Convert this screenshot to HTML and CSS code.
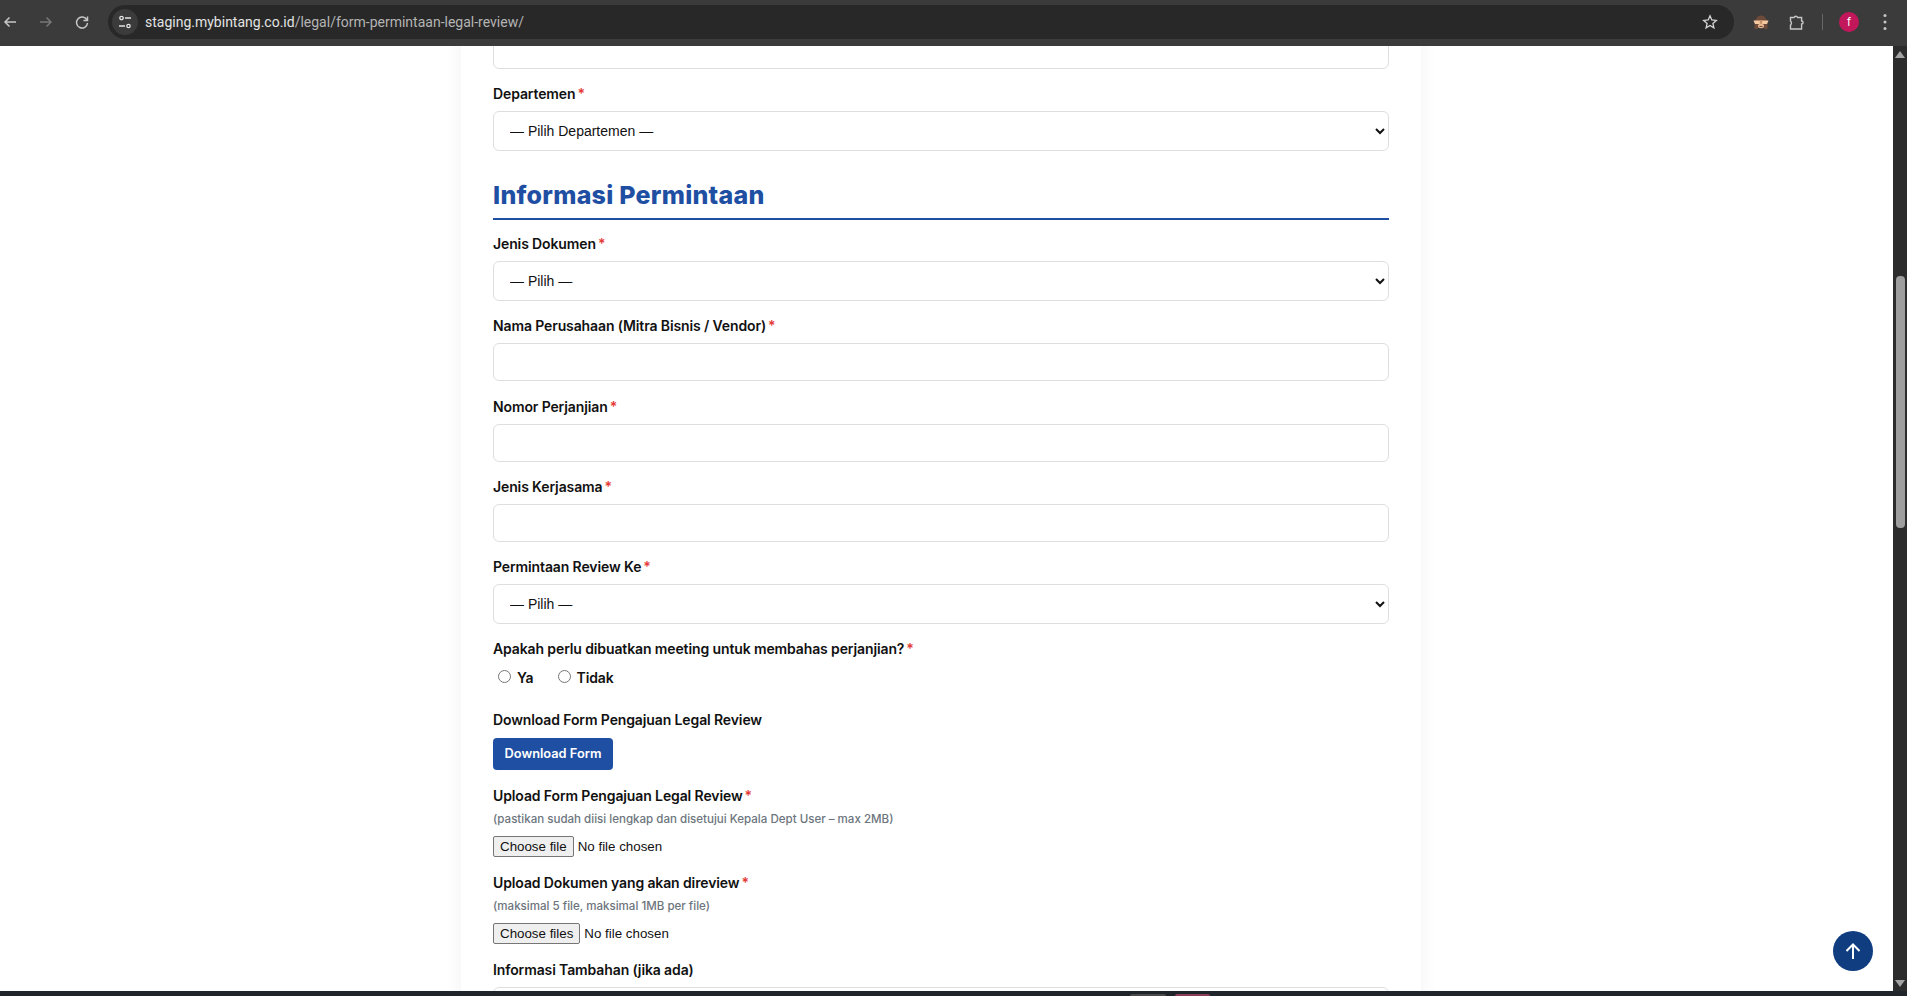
FILE: index.html
```html
<!DOCTYPE html>
<html lang="id">
<head>
<meta charset="utf-8">
<title>Form Permintaan Legal Review</title>
<link rel="stylesheet" href="styles.css">
</head>
<body>
<header class="toolbar">
  <div class="nav">
    <svg class="ic" viewBox="0 0 16 16" width="16" height="16"><path d="M14 8H3M7.500 3.500 3 8l4.500 4.500" fill="none" stroke="#c7c7c7" stroke-width="1.500"/></svg>
    <svg class="ic" viewBox="0 0 16 16" width="16" height="16"><path d="M2 8h11M8.500 3.500 13 8l-4.500 4.500" fill="none" stroke="#777" stroke-width="1.500"/></svg>
    <svg class="ic" viewBox="0 0 16 16" width="16" height="16"><path d="M12.900 6A5.500 5.500 0 1 0 13.500 9M13.500 2.500V6.500H9.500" fill="none" stroke="#c7c7c7" stroke-width="1.500"/></svg>
  </div>
  <div class="omnibox">
    <div class="tune">
      <svg viewBox="0 0 16 16" width="16" height="16"><g fill="none" stroke="#e3e3e3" stroke-width="1.300"><circle cx="4.500" cy="4" r="1.700"/><circle cx="11.500" cy="12" r="1.700"/><path d="M8 4h6M2 12h6"/></g></svg>
    </div>
    <span class="url">staging.mybintang.co.id<span class="url-path">/legal/form-permintaan-legal-review/</span></span>
    <svg class="star" viewBox="0 0 16 16" width="16" height="16"><path d="M8 1.800 9.800 6l4.500.4-3.400 3 1 4.400L8 11.500l-3.900 2.300 1-4.400-3.400-3L6.200 6z" fill="none" stroke="#d6d6d6" stroke-width="1.300"/></svg>
  </div>
  <div class="actions">
    <svg class="monkey" viewBox="0 0 16 16" width="16" height="16"><path d="M1.500 15V10a6.500 8.500 0 0 1 13 0v5h-3l-1-2h-5l-1 2z" fill="#6d4a3a"/><path d="M.5 6.500h15l-1.500 3.500H2z" fill="#f5c9a0"/><rect x="6.800" y="6.500" width="2.400" height="3.500" fill="#c9916c"/><ellipse cx="8" cy="12" rx="3" ry="2.200" fill="#e9b78f"/><path d="M6.500 12.500h3" stroke="#6d4a3a"/></svg>
    <svg class="puzzle" viewBox="0 0 16 16" width="16" height="16"><path d="M1.500 3.500H5a1.900 1.900 0 0 1 3.600 0h4V7a1.500 1.500 0 0 1 0 3v5h-11.100v-4a2.600 2.600 0 0 0 0-4z" fill="none" stroke="#c7c7c7" stroke-width="1.400"/></svg>
    <span class="sep"></span>
    <span class="avatar">f</span>
    <svg class="menu" viewBox="0 0 4 16" width="4" height="16"><circle cx="2" cy="1.500" r="1.500" fill="#c7c7c7"/><circle cx="2" cy="8" r="1.500" fill="#c7c7c7"/><circle cx="2" cy="14.500" r="1.500" fill="#c7c7c7"/></svg>
  </div>
</header>

<div class="viewport">
  <main class="page">
    <form class="card">
      <input class="control" type="text" aria-label="Nama">

      <label class="label">Departemen<span class="req">*</span></label>
      <select class="control select"><option>— Pilih Departemen —</option></select>

      <h2 class="section">Informasi Permintaan</h2>

      <label class="label">Jenis Dokumen<span class="req">*</span></label>
      <select class="control select"><option>— Pilih —</option></select>

      <label class="label">Nama Perusahaan (Mitra Bisnis / Vendor)<span class="req">*</span></label>
      <input class="control" type="text">

      <label class="label">Nomor Perjanjian<span class="req">*</span></label>
      <input class="control" type="text">

      <label class="label">Jenis Kerjasama<span class="req">*</span></label>
      <input class="control" type="text">

      <label class="label">Permintaan Review Ke<span class="req">*</span></label>
      <select class="control select"><option>— Pilih —</option></select>

      <label class="label tight">Apakah perlu dibuatkan meeting untuk membahas perjanjian?<span class="req">*</span></label>
      <div class="radios">
        <label class="radio"><input type="radio" name="meeting"> Ya</label>
        <label class="radio"><input type="radio" name="meeting"> Tidak</label>
      </div>

      <label class="label dl">Download Form Pengajuan Legal Review</label>
      <a class="btn">Download Form</a>

      <label class="label up">Upload Form Pengajuan Legal Review<span class="req">*</span></label>
      <small class="hint">(pastikan sudah diisi lengkap dan disetujui Kepala Dept User – max 2MB)</small>
      <div class="file"><button class="file-btn" type="button">Choose file</button><span>No file chosen</span></div>

      <label class="label up">Upload Dokumen yang akan direview<span class="req">*</span></label>
      <small class="hint">(maksimal 5 file, maksimal 1MB per file)</small>
      <div class="file"><button class="file-btn" type="button">Choose files</button><span>No file chosen</span></div>

      <label class="label">Informasi Tambahan (jika ada)</label>
      <textarea class="control area"></textarea>
    </form>
  </main>
  <div class="scrollbar">
    <span class="arrow up-arrow"></span>
    <div class="track"><span class="thumb"></span></div>
    <span class="arrow down-arrow"></span>
  </div>
  <button class="to-top" type="button" aria-label="Kembali ke atas">
    <svg viewBox="0 0 16 16" width="16" height="16"><path d="M8 16V1.500M1.500 8 8 1.500 14.500 8" fill="none" stroke="#fff" stroke-width="2"/></svg>
  </button>
</div>
<footer class="taskbar"><span class="task task-a"></span><span class="task task-b"></span></footer>
</body>
</html>
```
FILE: styles.css
```css
* { box-sizing: border-box; }
html, body { height: 100%; }
body {
  margin: 0;
  height: 996px;
  display: flex;
  flex-direction: column;
  overflow: hidden;
  background: #fff;
  font-family: Inter, "Liberation Sans", sans-serif;
}
.toolbar {
  flex: 0 0 46px;
  display: flex;
  align-items: center;
  padding-bottom: 2px;
  background: #3b3b3b;
  color: #e3e3e3;
}
.nav { display: flex; gap: 20px; padding-left: 2px; width: 108px; align-items: center; }
.ic { display: block; }
.omnibox {
  flex: 0 0 1626px;
  height: 34px;
  border-radius: 17px;
  background: #282828;
  display: flex;
  align-items: center;
  padding: 0 6px 0 4px;
}
.tune {
  width: 26px;
  height: 26px;
  border-radius: 50%;
  background: #3b3b3b;
  display: flex;
  align-items: center;
  justify-content: center;
  margin-right: 7px;
}
.url { flex: 1; font-size: 14px; font-family: Roboto, sans-serif; color: #e3e3e3; }
.url-path { color: #b4b4b4; }
.star { margin-right: 10px; }
.actions { display: flex; align-items: center; flex: 1; padding-left: 19px; }
.monkey { margin-right: 20px; }
.puzzle { margin-right: 17px; }
.sep { width: 1px; height: 16px; background: #666; margin-right: 16px; }
.avatar {
  width: 20px;
  height: 20px;
  border-radius: 50%;
  background: #c2185b;
  color: #fff;
  font-size: 11px;
  display: flex;
  align-items: center;
  justify-content: center;
  margin-right: 24px;
}
.viewport { flex: 1; min-height: 0; display: flex; position: relative; }
.page { flex: 1; min-width: 0; overflow: hidden; padding-left: 461px; }
.card {
  width: 960px;
  margin-top: -15px;
  padding: 0 32px;
  background: #fff;
  box-shadow: 0 0 18px rgba(0, 0, 0, .05);
  display: flex;
  flex-direction: column;
  align-items: flex-start;
  min-height: 1100px;
}
.control {
  display: block;
  width: 100%;
  height: 38px;
  margin: 0 0 16.300px;
  padding: 0 16px;
  border: 1px solid #dedede;
  border-radius: 6px;
  background: #fff;
  color: #111;
  font: 14px "Liberation Sans", sans-serif;
}
.select { height: 40px; margin-bottom: 16px; padding: 0 12px; }
.area { height: 100px; margin: 0; }
.label {
  display: block;
  font-size: 14px;
  font-weight: 600;
  letter-spacing: -.12px;
  line-height: 17px;
  margin-bottom: 9px;
  color: #111;
}
.req { color: #e53935; margin-left: 2px; }
.section {
  align-self: stretch;
  margin: 10px 0 15px;
  padding-bottom: 5px;
  border-bottom: 2px solid #1f4fa3;
  color: #1f4fa3;
  font-size: 25px;
  font-weight: 800;
  letter-spacing: .26px;
  line-height: 36px;
}
.tight { margin-bottom: 12px; }
.radios { display: flex; gap: 24px; padding-left: 5px; margin-bottom: 25px; }
.radio { display: flex; align-items: center; font-size: 14px; font-weight: 600; letter-spacing: -.12px; line-height: 17px; color: #111; }
.radio input { margin: 0 6px 3px 0; width: 13px; height: 13px; }
.dl { margin-bottom: 10px; }
.btn {
  display: block;
  width: 120px;
  height: 32px;
  border-radius: 4px;
  background: #1f4fa3;
  color: #fff;
  font-size: 12.800px;
  font-weight: 600;
  line-height: 32px;
  text-align: center;
  margin-bottom: 17px;
}
.up { margin-bottom: 8px; }
.hint { display: block; font-size: 11.550px; font-weight: 500; line-height: 14px; color: #6c757d; margin-bottom: 10px; }
.file {
  display: flex;
  align-items: center;
  gap: 4px;
  height: 21px;
  margin-bottom: 17px;
  font: 13.333px "Liberation Sans", sans-serif;
  color: #111;
}
.file-btn {
  height: 21px;
  padding: 0 6px;
  border: 1px solid #767676;
  border-radius: 2px;
  background: #efefef;
  color: #111;
  font: inherit;
}
.scrollbar {
  flex: 0 0 14px;
  background: #2c2c2c;
  display: flex;
  flex-direction: column;
  align-items: center;
}
.track { flex: 1; width: 100%; padding: 213px 2px 0 3px; }
.thumb { display: block; height: 252px; background: #9e9e9e; border-radius: 4px; }
.arrow { width: 0; height: 0; border-left: 5px solid transparent; border-right: 5px solid transparent; }
.up-arrow { border-bottom: 7px solid #a3a3a3; margin: 5px 0; }
.down-arrow { border-top: 7px solid #a3a3a3; margin: 5px 0 4px; }
.to-top {
  position: absolute;
  right: 34px;
  bottom: 20px;
  width: 40px;
  height: 40px;
  padding: 0;
  border: 0;
  border-radius: 50%;
  background: #0f3d80;
  display: flex;
  align-items: center;
  justify-content: center;
}
.taskbar { flex: 0 0 5px; background: #20242b; display: flex; align-items: flex-end; padding-left: 1130px; gap: 9px; }
.task { height: 2px; border-radius: 2px 2px 0 0; }
.task-a { width: 36px; background: #4a4a4a; }
.task-b { width: 35px; background: #8a3d55; }
```
